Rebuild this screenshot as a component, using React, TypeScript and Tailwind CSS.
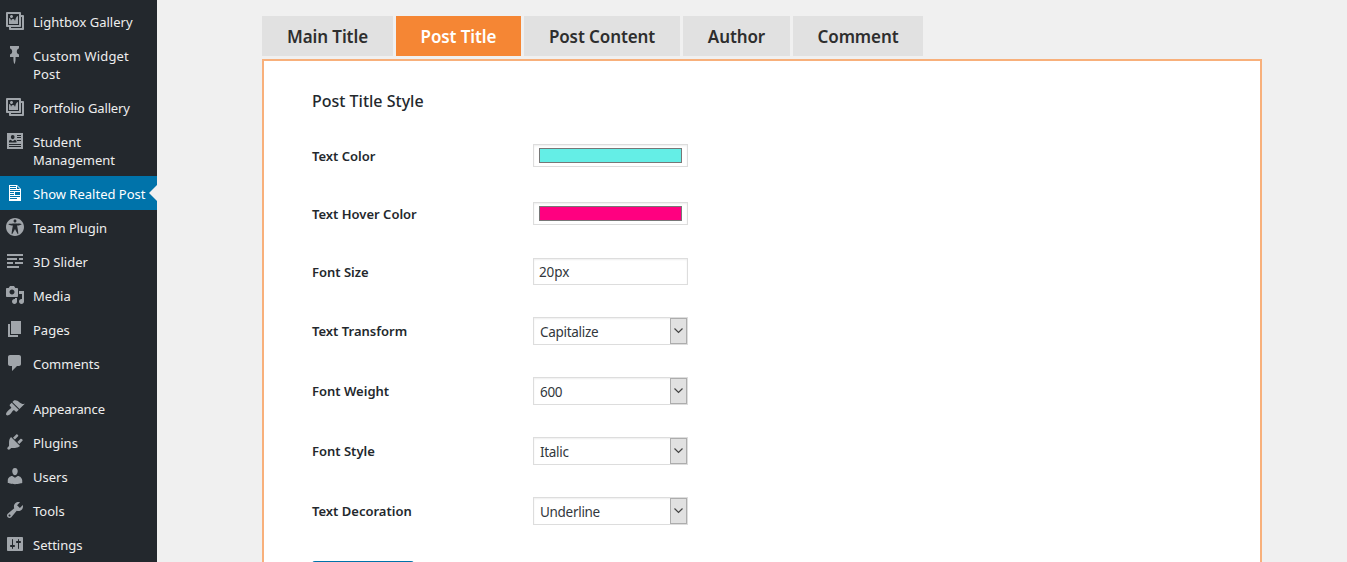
import React from "react";

const icons: Record<string, string> = {
  gallery:
    "M16 4h1.96c.57 0 1.04.47 1.04 1.04v12.92c0 .57-.47 1.04-1.04 1.04H5.04C4.47 19 4 18.53 4 17.96V16H2.04C1.47 16 1 15.53 1 14.96V2.04C1 1.47 1.47 1 2.04 1h12.92c.57 0 1.04.47 1.04 1.04V4zM3 14h11V3H3v11zm5-8.5C8 4.67 7.33 4 6.5 4S5 4.67 5 5.5 5.67 7 6.5 7 8 6.33 8 5.5zm2 4.5s1-5 3-5v8H4V7c2 0 2 3 2 3s.33-2 2-2 2 2 2 2zm7 7V6h-1v8.96c0 .57-.47 1.04-1.04 1.04H6v1h11z",
  pin: "M5 3.61V1.04l8.99-.01-.01 2.58c-1.22.26-2.16 1.35-2.16 2.67v.5c.01 1.31.93 2.4 2.17 2.66l-.01 2.58h-3.41l-.01 2.57c0 .6-.47 4.41-1.06 4.41-.6 0-1.08-3.81-1.08-4.41v-2.56L5 12.02l.01-2.58c1.23-.25 2.15-1.35 2.15-2.66v-.5c0-1.31-.92-2.41-2.16-2.67z",
  card: "M2 2h16v16H2V2zM5.8 6.100a1.900 2.100 0 1 0 3.800 0a1.900 2.100 0 1 0-3.800 0zM4 11.500h7.500V9.800L9.800 8.800 7.700 10.300 5.600 8.800 4 9.800zM12 4v1h4V4zM12 6v1h4V6zM12 9v1h4V9zM4 13v1h12v-1zM4 15v1h12v-1z",
  document:
    "M12 2l4 4v12H4V2h8zM5 3v1h6V3H5zm7 3h3l-3-3v3zM5 5v1h6V5H5zm10 3V7H5v1h10zM5 9v1h4V9H5zm10 3V9h-5v3h5zM5 11v1h4v-1H5zm10 3v-1H5v1h10zm-3 2v-1H5v1h7z",
  access:
    "M19 10c0-4.97-4.03-9-9-9s-9 4.03-9 9 4.03 9 9 9 9-4.03 9-9zm-9-7.400c.83 0 1.500.67 1.500 1.500s-.67 1.510-1.500 1.510c-.82 0-1.500-.68-1.500-1.510s.68-1.500 1.500-1.500zM3.400 7.360c0-.65 6.600-.76 6.600-.76s6.600.11 6.600.76-4.470 1.400-4.470 1.400 1.690 8.140 1.060 8.380c-.62.24-3.190-5.190-3.190-5.190s-2.560 5.430-3.180 5.190c-.63-.24 1.060-8.380 1.060-8.380S3.400 8.010 3.400 7.360z",
  slider: "M2 3h16v2H2zM2 7h10v2H2zM14 7h4v2h-4zM2 11h6v2H2zM10 11h8v2h-8zM2 15h12v2H2z",
  media:
    "M13 11V4c0-.55-.45-1-1-1h-1.670L9 1H5L3.670 3H2c-.55 0-1 .45-1 1v7c0 .55.45 1 1 1h10c.55 0 1-.45 1-1zM7 4.500c1.380 0 2.500 1.120 2.500 2.500S8.380 9.500 7 9.500 4.500 8.380 4.500 7 5.620 4.500 7 4.500zM14 6h5v10.500c0 1.380-1.120 2.500-2.500 2.500S14 17.880 14 16.500s1.120-2.500 2.500-2.500c.17 0 .34.02.5.05V9h-3V6zm-4 8.050V13h2v3.500c0 1.380-1.120 2.500-2.500 2.500S7 17.880 7 16.500 8.120 14 9.500 14c.17 0 .34.02.5.05z",
  page: "M6 15V2h10v13H6zm-1 1h8v2H3V5h2v11z",
  comment: "M5 2h9c1.100 0 2 .9 2 2v7c0 1.100-.9 2-2 2h-2l-5 5v-5H5c-1.100 0-2-.9-2-2V4c0-1.100.9-2 2-2z",
  brush:
    "M14.480 11.060L7.410 3.990l1.500-1.500c.5-.56 2.300-.47 3.510.32 1.210.8 1.430 1.280 2.910 2.100 1.180.64 2.450 1.260 4.450.85zm-.71.71L6.700 4.700 4.930 6.470c-.39.39-.39 1.020 0 1.410l1.060 1.060c.39.39.39 1.030 0 1.420-.6.6-1.430 1.110-2.210 1.690-.35.26-.7.53-1.010.84C1.430 14.230.4 16.080 1.400 17.070c.99 1 2.840-.03 4.180-1.360.31-.31.58-.66.85-1.020.57-.78 1.080-1.610 1.690-2.210.39-.39 1.020-.39 1.410 0l1.060 1.060c.39.39 1.020.39 1.410 0z",
  plug: "M13.110 4.360L9.870 7.600 8 5.730l3.240-3.240c.35-.34 1.050-.2 1.560.32.52.51.66 1.210.31 1.550zm-8 1.770l.91-1.120 9.010 9.010-1.190.84c-.71.71-2.630 1.160-3.820 1.160H6.140L4.900 17.260c-.59.59-1.540.59-2.120 0-.59-.58-.59-1.530 0-2.120l1.240-1.240v-3.880c0-1.130.4-3.190 1.090-3.890zm7.260 3.970l3.240-3.240c.34-.35 1.040-.21 1.550.31.52.51.66 1.210.31 1.550l-3.240 3.250z",
  user: "M10 9.250c-2.270 0-2.730-3.440-2.730-3.440C7 4.020 7.820 2 9.970 2c2.160 0 2.980 2.020 2.710 3.810 0 0-.41 3.440-2.680 3.440zm0 2.570L12.720 10c2.390 0 4.520 2.330 4.520 4.530v2.490s-3.650 1.130-7.240 1.130c-3.650 0-7.240-1.130-7.240-1.130v-2.490c0-2.250 1.940-4.480 4.470-4.480z",
  wrench:
    "M16.680 9.770c-1.340 1.340-3.300 1.670-4.950.99l-5.410 6.520c-.99.99-2.590.99-3.580 0s-.99-2.590 0-3.570l6.520-5.420c-.68-1.650-.35-3.610.99-4.950 1.280-1.280 3.120-1.620 4.720-1.060l-2.890 2.890 2.820 2.820 2.860-2.870c.53 1.580.18 3.390-1.080 4.650zM3.810 16.210c.4.39 1.040.39 1.430 0 .4-.4.4-1.040 0-1.430-.39-.4-1.030-.4-1.430 0-.39.39-.39 1.030 0 1.430z",
  settings:
    "M18 16V4c0-.55-.45-1-1-1H3c-.55 0-1 .45-1 1v12c0 .55.45 1 1 1h14c.55 0 1-.45 1-1zM8 11h1c.55 0 1 .45 1 1s-.45 1-1 1H8v1.500c0 .28-.22.5-.5.5s-.5-.22-.5-.5V13H6c-.55 0-1-.45-1-1s.45-1 1-1h1V5.500c0-.28.22-.5.5-.5s.5.22.5.5V11zm5-2h-1c-.55 0-1-.45-1-1s.45-1 1-1h1V5.500c0-.28.22-.5.5-.5s.5.22.5.5V7h1c.55 0 1 .45 1 1s-.45 1-1 1h-1v5.500c0 .28-.22.5-.5.5s-.5-.22-.5-.5V9z",
};

type Item = { icon: string; lines: string[]; track?: string; active?: boolean; gap?: boolean };

const menu: Item[] = [
  { icon: "gallery", lines: ["Lightbox Gallery"] },
  { icon: "pin", lines: ["Custom Widget", "Post"], track: "tracking-[0.14px]" },
  { icon: "gallery", lines: ["Portfolio Gallery"], track: "tracking-[-0.12px]" },
  { icon: "card", lines: ["Student", "Management"] },
  { icon: "document", lines: ["Show Realted Post"], active: true },
  { icon: "access", lines: ["Team Plugin"], track: "tracking-[-0.12px]" },
  { icon: "slider", lines: ["3D Slider"] },
  { icon: "media", lines: ["Media"] },
  { icon: "page", lines: ["Pages"] },
  { icon: "comment", lines: ["Comments"] },
  { icon: "brush", lines: ["Appearance"], track: "tracking-[-0.1px]", gap: true },
  { icon: "plug", lines: ["Plugins"] },
  { icon: "user", lines: ["Users"] },
  { icon: "wrench", lines: ["Tools"] },
  { icon: "settings", lines: ["Settings"] },
];

const tabs = [
  { label: "Main Title", size: "w-[131px]" },
  { label: "Post Title", size: "w-[125px]", active: true },
  { label: "Post Content", size: "w-[156px]" },
  { label: "Author", size: "w-[107px]" },
  { label: "Comment", size: "w-[130px]" },
];

function Sidebar() {
  return (
    <nav className="flex w-[157px] shrink-0 flex-col bg-[#23282d] pt-[4px]">
      {menu.map((m, i) => (
        <a
          key={i}
          className={`relative flex shrink-0 items-start pt-[9px] pb-[7px] ${m.gap ? "mt-[11px]" : ""} ${
            m.active ? "bg-[#0073aa] text-white" : "text-[#eee]"
          }`}
        >
          <svg
            viewBox="0 0 20 20"
            className={`mt-[-2px] ml-[5px] h-[20px] w-[20px] shrink-0 ${m.active ? "fill-white" : "fill-[#a0a5aa]"}`}
          >
            <path fillRule="evenodd" d={icons[m.icon]} />
          </svg>
          <span className={`ml-[8px] flex flex-col text-[13px] leading-[18px] whitespace-nowrap ${m.track ?? ""}`}>
            {m.lines.map((t) => (
              <span key={t}>{t}</span>
            ))}
          </span>
          {m.active && (
            <span className="absolute top-[9px] right-0 border-y-8 border-r-8 border-y-transparent border-r-[#f0f0f0]" />
          )}
        </a>
      ))}
    </nav>
  );
}

function Row({
  label,
  height,
  nudge = "pt-[2px]",
  children,
}: {
  label: string;
  height: string;
  nudge?: string;
  children: React.ReactNode;
}) {
  return (
    <div className={`flex items-center ${height}`}>
      <label
        className={`w-[221px] shrink-0 text-[13px] leading-[18px] font-semibold text-[#23282d] ${nudge}`}
      >
        {label}
      </label>
      {children}
    </div>
  );
}

const field = "w-[155px] border border-[#ddd] bg-white shadow-[inset_0_1px_2px_rgba(0,0,0,0.07)]";

function ColorField({ swatch }: { swatch: string }) {
  return (
    <div className={`${field} flex h-[23px] px-[5px] py-[3px]`}>
      <div className={`h-[15px] w-[144px] border border-[#777] ${swatch}`} />
    </div>
  );
}

function SelectField({ value }: { value: string }) {
  return (
    <div
      className={`${field} flex h-[28px] items-center justify-between pl-[6px] text-[13.500px] tracking-[-0.3px] text-[#32373c]`}
    >
      <span className="pt-[3px]">{value}</span>
      <span className="flex h-[26px] w-[17px] items-center justify-center border border-[#adadad] bg-[#e1e1e1]">
        <svg viewBox="0 0 9 6" className="h-[6px] w-[9px] fill-none stroke-[#444]">
          <path d="M.5.5l4 4 4-4" strokeWidth="1.200" />
        </svg>
      </span>
    </div>
  );
}

export default function App() {
  return (
    <div className="flex h-[562px] w-[1347px] overflow-hidden bg-[#f0f0f0] font-['Noto_Sans','Open_Sans',sans-serif]">
      <Sidebar />
      <main className="ml-[105px] flex w-[1000px] flex-col pt-[16px]">
        <div className="flex shrink-0 gap-[3px]">
          {tabs.map((t) => (
            <button
              key={t.label}
              className={`flex h-[40px] items-center justify-center pt-[2px] text-[17px] font-semibold tracking-[-0.1px] whitespace-nowrap ${t.size} ${
                t.active ? "bg-[#f58634] text-white" : "bg-[#e1e1e1] text-[#2e2e2e]"
              }`}
            >
              {t.label}
            </button>
          ))}
        </div>
        <section className="mt-[3px] h-[560px] shrink-0 border-2 border-[#f8b07b] bg-white px-[48px] pt-[28px]">
          <h3 className="h-[24px] text-[16px] leading-[24px] font-medium text-[#23282d]">Post Title Style</h3>
          <div className="pt-[13px]">
            <Row label="Text Color" height="h-[58px]"><ColorField swatch="bg-[#64eee6]" /></Row>
            <Row label="Text Hover Color" height="h-[58px]"><ColorField swatch="bg-[#ff0080]" /></Row>
            <Row label="Font Size" height="mb-[1px] h-[58px]">
              <div
                className={`${field} flex h-[27px] items-center pt-[2px] pl-[5px] text-[13.500px] tracking-[-0.1px] text-[#32373c]`}
              >
                20px
              </div>
            </Row>
            <Row label="Text Transform" height="h-[60px]" nudge="pt-0"><SelectField value="Capitalize" /></Row>
            <Row label="Font Weight" height="h-[60px]" nudge="pt-0"><SelectField value="600" /></Row>
            <Row label="Font Style" height="h-[60px]" nudge="pt-0"><SelectField value="Italic" /></Row>
            <Row label="Text Decoration" height="h-[60px]" nudge="pt-0"><SelectField value="Underline" /></Row>
          </div>
          <div className="mt-[20px] h-[30px] w-[102px] rounded-[3px] bg-[#0073aa]" />
        </section>
      </main>
    </div>
  );
}
